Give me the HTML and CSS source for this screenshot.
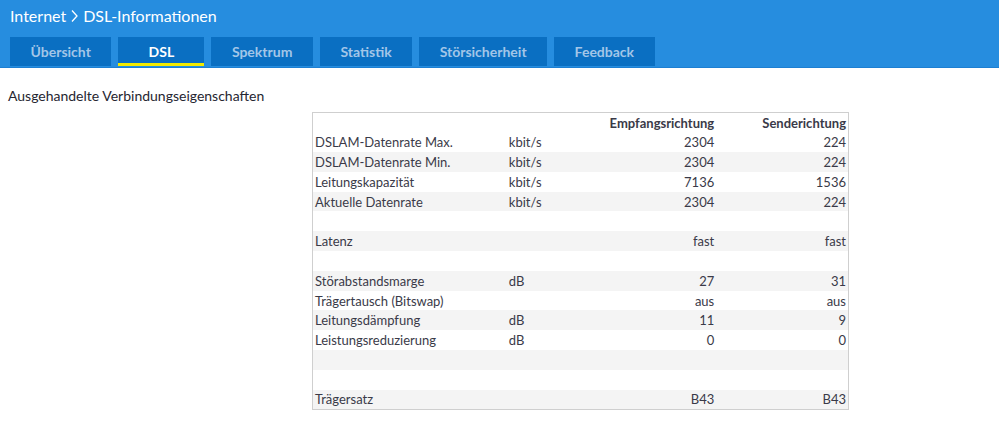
FILE: index.html
```html
<!DOCTYPE html>
<html lang="de">
<head>
<meta charset="utf-8">
<title>DSL-Informationen</title>
<link rel="stylesheet" href="styles.css">
</head>
<body>
<header class="topbar">
  <div class="crumbs">Internet <span class="sep"><svg width="9" height="14" viewBox="0 0 9 14"><path d="M2 1.5 L7 7 L2 12.5" fill="none" stroke="#fff" stroke-width="1.3"/></svg></span> DSL-Informationen</div>
  <nav class="tabs">
    <a class="tab">Übersicht</a>
    <a class="tab active">DSL</a>
    <a class="tab">Spektrum</a>
    <a class="tab">Statistik</a>
    <a class="tab">Störsicherheit</a>
    <a class="tab">Feedback</a>
  </nav>
</header>
<main class="content">
  <h2 class="section-title">Ausgehandelte Verbindungseigenschaften</h2>
  <div class="table-wrap">
  <table class="dsl">
    <colgroup><col class="c-label"><col class="c-unit"><col class="c-rx"><col class="c-tx"></colgroup>
    <thead>
      <tr><th></th><th></th><th class="num">Empfangsrichtung</th><th class="num">Senderichtung</th></tr>
    </thead>
    <tbody>
      <tr><td>DSLAM-Datenrate Max.</td><td>kbit/s</td><td class="num">2304</td><td class="num">224</td></tr>
      <tr><td>DSLAM-Datenrate Min.</td><td>kbit/s</td><td class="num">2304</td><td class="num">224</td></tr>
      <tr><td>Leitungskapazität</td><td>kbit/s</td><td class="num">7136</td><td class="num">1536</td></tr>
      <tr><td>Aktuelle Datenrate</td><td>kbit/s</td><td class="num">2304</td><td class="num">224</td></tr>
      <tr><td></td><td></td><td></td><td></td></tr>
      <tr><td>Latenz</td><td></td><td class="num">fast</td><td class="num">fast</td></tr>
      <tr><td></td><td></td><td></td><td></td></tr>
      <tr><td>Störabstandsmarge</td><td>dB</td><td class="num">27</td><td class="num">31</td></tr>
      <tr><td>Trägertausch (Bitswap)</td><td></td><td class="num">aus</td><td class="num">aus</td></tr>
      <tr><td>Leitungsdämpfung</td><td>dB</td><td class="num">11</td><td class="num">9</td></tr>
      <tr><td>Leistungsreduzierung</td><td>dB</td><td class="num">0</td><td class="num">0</td></tr>
      <tr><td></td><td></td><td></td><td></td></tr>
      <tr><td></td><td></td><td></td><td></td></tr>
      <tr><td>Trägersatz</td><td></td><td class="num">B43</td><td class="num">B43</td></tr>
    </tbody>
  </table>
  </div>
</main>
</body>
</html>
```
FILE: styles.css
```css
* { box-sizing: border-box; }
html, body { margin: 0; padding: 0; background: #fff; }
body { font-family: Lato, "Noto Sans", "Liberation Sans", sans-serif; color: #3a3a44; }

.topbar {
  background: #268ddf;
  height: 68px;
  border-bottom: 1px solid #1d7fd2;
  padding: 6px 0 0 10px;
  display: flex;
  flex-direction: column;
}
.crumbs {
  color: #fff;
  font-size: 16px;
  line-height: 20px;
  height: 31px;
  display: flex;
  align-items: flex-start;
  gap: 4px;
}
.crumbs .sep { display: inline-flex; align-items: center; height: 20px; }
.tabs { display: flex; gap: 7px; }
.tab {
  height: 29px;
  min-width: 86px;
  padding: 0 20.5px 1px;
  background: #0a6fc2;
  color: #a3c6e8;
  font-size: 14px;
  font-weight: 700;
  display: flex;
  align-items: center;
  justify-content: center;
}
.tab.active {
  color: #fff;
  box-shadow: inset 0 -3px 0 #f2ea00;
}

.content { padding: 0 8px; }
.section-title {
  margin: 0;
  padding-top: 19px;
  height: 44px;
  font-size: 14px;
  line-height: 18px;
  font-weight: 400;
  color: #262631;
}
.table-wrap { display: flex; padding-left: 304px; }
.dsl {
  border-collapse: collapse;
  border: 1px solid #cfcfcf;
  width: 537px;
  table-layout: fixed;
  font-size: 13px;
  color: #3a3a48;
}
.c-label { width: 194px; }
.c-unit { width: 92px; }
.c-rx { width: 117px; }
.c-tx { width: 132px; }
.dsl th, .dsl td {
  height: 19.8px;
  padding: 0 2px;
  line-height: 16px;
  text-align: left;
  white-space: nowrap;
}
.dsl th { font-weight: 700; }
.dsl .num { text-align: right; }
.dsl tr:nth-child(odd) { background: #fff; }
.dsl thead tr, .dsl tbody tr:nth-child(even) { background: #f4f4f4; }
.dsl td:last-child, .dsl th:last-child { padding-right: 2px; }
```
